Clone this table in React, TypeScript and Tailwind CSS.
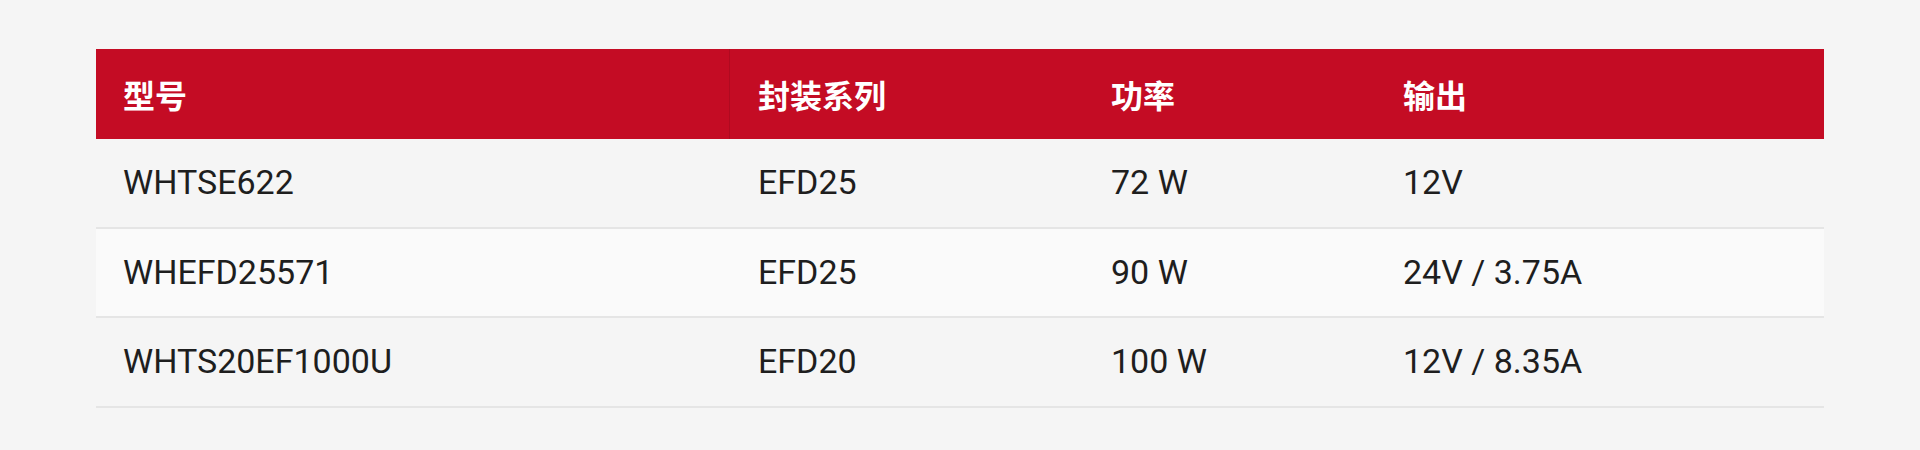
const rows = [
  { model: "WHTSE622", pkg: "EFD25", power: "72 W", output: "12V" },
  { model: "WHEFD25571", pkg: "EFD25", power: "90 W", output: "24V / 3.75A" },
  { model: "WHTS20EF1000U", pkg: "EFD20", power: "100 W", output: "12V / 8.35A" },
];

export default function App() {
  return (
    <div className="min-h-screen bg-[#f5f5f5] px-[96px] pt-[49px] font-['Roboto','Noto_Sans_CJK_SC',sans-serif] text-[#1e1e1e]">
      <div className="w-full">
        {/* header */}
        <div className="flex h-[90px] items-center bg-[#c40c24] text-[32px] font-bold text-white font-['Noto_Sans_CJK_SC',sans-serif]">
          <div className="flex h-full w-[634px] items-center border-r border-black/10 pl-[27px]">型号</div>
          <div className="w-[353px] pl-[28px]">封装系列</div>
          <div className="w-[292px] pl-[28px]">功率</div>
          <div className="flex-1 pl-[28px]">输出</div>
        </div>

        {/* body rows */}
        {rows.map((r, i) => (
          <div
            key={r.model}
            className={
              "flex h-[89.5px] items-center border-b-2 border-[#e5e5e5] text-[34px] " +
              (i === 1 ? "bg-[#fafafa]" : "bg-[#f5f5f5]")
            }
          >
            <div className="w-[634px] pl-[27px]">{r.model}</div>
            <div className="w-[353px] pl-[28px]">{r.pkg}</div>
            <div className="w-[292px] pl-[28px]">{r.power}</div>
            <div className="flex-1 pl-[28px]">{r.output}</div>
          </div>
        ))}
      </div>
    </div>
  );
}
